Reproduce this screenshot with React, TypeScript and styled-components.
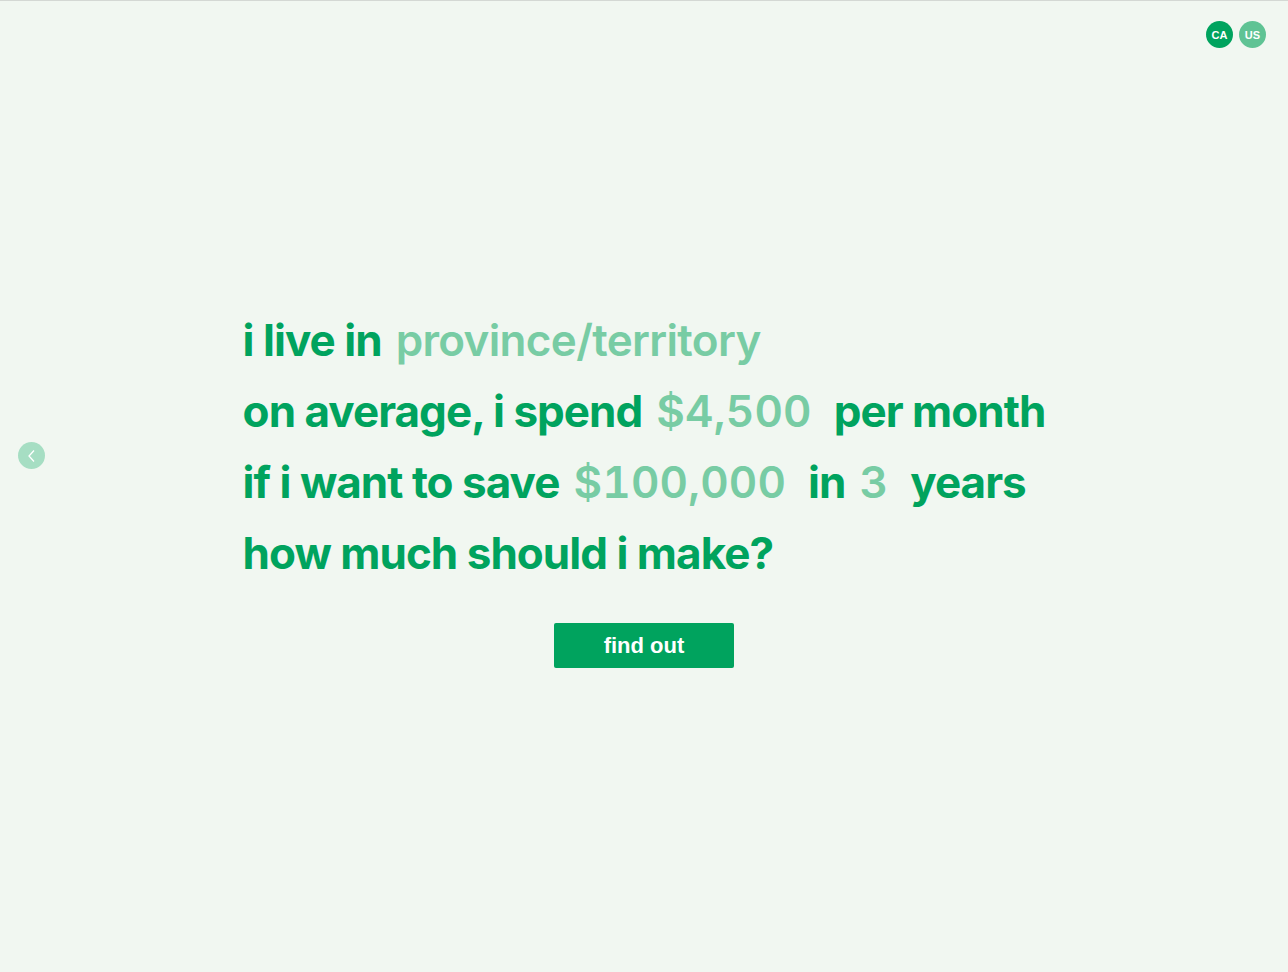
import React from 'react'
import styled, { createGlobalStyle } from 'styled-components'

const dark = '#00a35e'
const light = '#78cca4'

const Global = createGlobalStyle`
  html, body {
    margin: 0;
    padding: 0;
    height: 100%;
  }
  body {
    background: #f1f7f1;
    font-family: Inter, "Noto Sans", sans-serif;
  }
  #root {
    height: 100%;
  }
`

export default function App() {
  return (
    <>
      <Global />
      <Page>
        <Countries>
          <Country active>CA</Country>
          <Country>US</Country>
        </Countries>

        <BackButton aria-label="back">
          <svg width="12" height="14" viewBox="0 0 12 14" fill="none">
            <path d="M8 1.5 L3 7 L8 12.5" stroke="#ffffff" strokeWidth="1.3" />
          </svg>
        </BackButton>

        <Form>
          <Line>
            <Word>i live in</Word>
            <Field>province/territory</Field>
          </Line>
          <Line>
            <Word>on average, i spend</Word>
            <Field numeric>$4,500</Field>
            <Word>per month</Word>
          </Line>
          <Line>
            <Word>if i want to save</Word>
            <Field numeric>$100,000</Field>
            <Word>in</Word>
            <Field numeric>3</Field>
            <Word>years</Word>
          </Line>
          <Line>
            <Word>how much should i make?</Word>
          </Line>
          <Submit>find out</Submit>
        </Form>
      </Page>
    </>
  )
}

const Page = styled.main`
  position: relative;
  box-sizing: border-box;
  height: 100%;
  min-height: 972px;
  border-top: 1px solid #d4d8d4;
  display: flex;
  align-items: center;
  justify-content: center;
`

const Countries = styled.div`
  position: absolute;
  top: 20px;
  right: 22px;
  display: flex;
  gap: 6px;
`

const Country = styled.button<{ active?: boolean }>`
  width: 27px;
  height: 27px;
  border-radius: 50%;
  border: none;
  padding: 0;
  background: ${(p) => (p.active ? dark : '#5fc394')};
  color: #ffffff;
  font-family: "Liberation Sans", Arial, sans-serif;
  font-weight: 700;
  font-size: 11px;
  display: flex;
  align-items: center;
  justify-content: center;
`

const BackButton = styled.button`
  position: absolute;
  left: 18px;
  top: 441px;
  width: 27px;
  height: 27px;
  border-radius: 50%;
  border: none;
  padding: 0;
  background: #a6dec3;
  display: flex;
  align-items: center;
  justify-content: center;
`

const Form = styled.div`
  display: flex;
  flex-direction: column;
  align-items: flex-start;
  margin-top: 8px;
`

const Line = styled.div`
  display: flex;
  align-items: baseline;
  gap: 14px;
  height: 71px;
  font-size: 44px;
  font-weight: 700;
  letter-spacing: -0.022em;
  white-space: nowrap;
`

const Word = styled.span`
  color: ${dark};
`

const Field = styled.span<{ numeric?: boolean }>`
  color: ${light};
  font-weight: 600;
  letter-spacing: ${(p) => (p.numeric ? '0.004em' : '-0.015em')};
  font-variant-numeric: tabular-nums;
  margin-right: ${(p) => (p.numeric ? '8px' : '0')};
`

const Submit = styled.button`
  align-self: center;
  margin-top: 26px;
  width: 180px;
  height: 45px;
  border: none;
  border-radius: 2px;
  background: ${dark};
  color: #ffffff;
  font-family: "Liberation Sans", Arial, sans-serif;
  font-weight: 700;
  font-size: 22px;
`
